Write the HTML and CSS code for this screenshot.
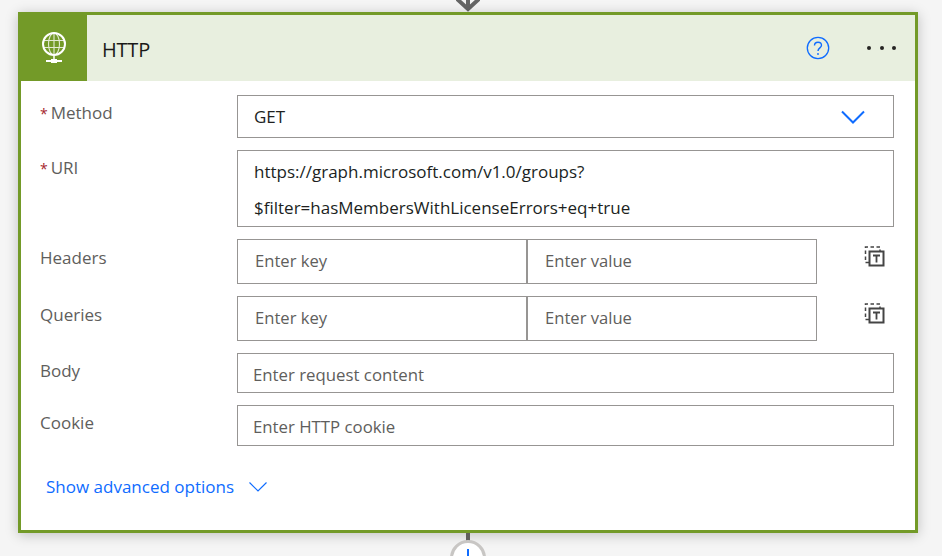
FILE: index.html
```html
<!DOCTYPE html>
<html lang="en">
<head>
<meta charset="utf-8">
<title>HTTP</title>
<link rel="stylesheet" href="styles.css">
</head>
<body>
<div class="canvas">
  <svg class="arrow-in" width="24" height="12" viewBox="0 0 24 12"><path d="M1-1 12 9 23-1M12 0V9" fill="none" stroke="#666" stroke-width="4"/></svg>
  <section class="card">
    <header class="head">
      <div class="logo">
        <svg width="28" height="34" viewBox="0 0 28 34" fill="none" stroke="#fff">
          <circle cx="14" cy="13" r="11" stroke-width="2"/>
          <g opacity=".8">
            <ellipse cx="14" cy="13" rx="5.500" ry="11" stroke-width="1.100"/>
            <path d="M14 2V24M3 9.500H25M3 16.500H25" stroke-width="1.100"/>
          </g>
          <path d="M14 25V29" stroke-width="1.500"/>
          <path d="M6 30H11M17 30H22" stroke-width="2"/>
          <rect x="11" y="28" width="6" height="4" fill="#fff" stroke="none"/>
        </svg>
      </div>
      <h1 class="title">HTTP</h1>
      <svg class="help" width="24" height="24" viewBox="0 0 24 24" fill="none" stroke="#0f6cff"><circle cx="12" cy="12" r="10.700" stroke-width="1.300"/><path d="M8.500 9.500C8.500 7.500 10 6.200 12 6.200S15.500 7.500 15.500 9.300C15.500 11.800 12 12 12 15" stroke-width="1.400"/><circle cx="12" cy="18" r=".9" fill="#0f6cff" stroke="none"/></svg>
      <div class="dots"><i></i><i></i><i></i></div>
    </header>
    <div class="form">
      <div class="row">
        <div class="label"><span class="req">*</span>Method</div>
        <div class="field select">GET
          <svg width="24" height="14" viewBox="0 0 24 14" fill="none"><path d="M1 1.500 12 12.500 23 1.500" stroke="#0f6cff" stroke-width="2"/></svg>
        </div>
      </div>
      <div class="row">
        <div class="label label-uri"><span class="req">*</span>URI</div>
        <div class="field uri">
          <div>https://graph.microsoft.com/v1.0/groups?</div>
          <div>$filter=hasMembersWithLicenseErrors+eq+true</div>
        </div>
      </div>
      <div class="row">
        <div class="label label-kv">Headers</div>
        <div class="kv"><div class="cell ph">Enter key</div><div class="cell ph second">Enter value</div></div>
        <svg class="switch" width="22" height="22" viewBox="0 0 22 22" fill="none" stroke="#444"><path d="M6 17.500H2.500V2H17V6" stroke-width="1.500" stroke-dasharray="3.500 2.500"/><rect x="6.500" y="6.500" width="14" height="14" stroke-width="2"/><path d="M10 10.500H17M13.500 10.500V17.500" stroke-width="1.800"/></svg>
      </div>
      <div class="row">
        <div class="label label-kv">Queries</div>
        <div class="kv"><div class="cell ph">Enter key</div><div class="cell ph second">Enter value</div></div>
        <svg class="switch" width="22" height="22" viewBox="0 0 22 22" fill="none" stroke="#444"><path d="M6 17.500H2.500V2H17V6" stroke-width="1.500" stroke-dasharray="3.500 2.500"/><rect x="6.500" y="6.500" width="14" height="14" stroke-width="2"/><path d="M10 10.500H17M13.500 10.500V17.500" stroke-width="1.800"/></svg>
      </div>
      <div class="row">
        <div class="label label-plain">Body</div>
        <div class="field plain body-field ph">Enter request content</div>
      </div>
      <div class="row">
        <div class="label label-plain">Cookie</div>
        <div class="field plain ph">Enter HTTP cookie</div>
      </div>
      <div class="advanced">Show advanced options
        <svg width="18" height="10" viewBox="0 0 18 10" fill="none"><path d="M.5.500 9 9 17.500.500" stroke="#0f6cff" stroke-width="1.200"/></svg>
      </div>
    </div>
    <div class="connector"></div>
    <div class="add"><span></span></div>
  </section>
</div>
</body>
</html>
```
FILE: styles.css
```css
* { box-sizing: border-box; }
html, body { margin: 0; height: 100%; }
body { background: #f5f5f5; font-family: "Open Sans", "Noto Sans", sans-serif; overflow: hidden; }
.canvas { position: relative; width: 942px; height: 556px; padding: 12px 24px 0 18px; overflow: hidden; }
.arrow-in { position: absolute; left: 456px; top: 0; }
.card { position: relative; width: 900px; height: 521px; background: #fff; border: 3px solid #739a28; box-shadow: 0 2px 12px rgba(0,0,0,.22); }
.head { display: flex; align-items: center; height: 66px; background: #e8efdf; }
.logo { width: 66px; height: 66px; background: #739a28; display: flex; align-items: center; justify-content: center; }
.title { margin: 2px 0 0 15px; font-size: 20px; font-weight: 400; color: #1b1a19; flex: 1; letter-spacing: -.2px; }
.help { margin-right: 37px; }
.dots { display: flex; gap: 8.500px; margin-right: 19px; }
.dots i { width: 4px; height: 4px; border-radius: 50%; background: #252423; }
.form { padding: 14px 0 0 19px; display: flex; flex-direction: column; gap: 12px; }
.row { display: flex; align-items: flex-start; position: relative; }
.label { width: 197px; font-size: 17px; color: #605e5c; line-height: 22px; padding-top: 7px; }
.label-uri { padding-top: 7px; }
.label-kv { padding-top: 8px; }
.label-plain { padding-top: 7px; }
.req { color: #a4262c; margin-right: 3px; font-size: 14px; }
.field { width: 657px; border: 1px solid #979593; font-size: 17px; color: #201f1e; padding-left: 16px; }
.select { height: 43px; display: flex; align-items: center; justify-content: space-between; padding-right: 28px; }
.uri { height: 77px; padding-top: 3px; line-height: 36px; }
.plain { height: 41px; line-height: 41px; padding-left: 15px; font-size: 16.800px; }
.body-field { height: 40px; }
.ph { color: #605e5c; }
.kv { display: flex; width: 580px; height: 45px; border: 1px solid #979593; }
.cell { width: 288px; font-size: 16.600px; line-height: 42px; padding-left: 17px; }
.second { width: 290px; border-left: 2px solid #979593; }
.switch { margin: 6px 0 0 46px; }
.advanced { display: flex; align-items: center; gap: 15px; margin: 17px 0 0 6px; font-size: 17px; color: #0f6cff; }
.connector { position: absolute; left: 445px; top: 518px; width: 4px; height: 8px; background: #605e5c; }
.add { position: absolute; left: 429px; top: 525px; width: 36px; height: 36px; border: 3px solid #c8c6c4; border-radius: 50%; background: #fff; display: flex; justify-content: center; padding-top: 6px; }
.add span { width: 2px; height: 12px; background: #0f6cff; }
```
